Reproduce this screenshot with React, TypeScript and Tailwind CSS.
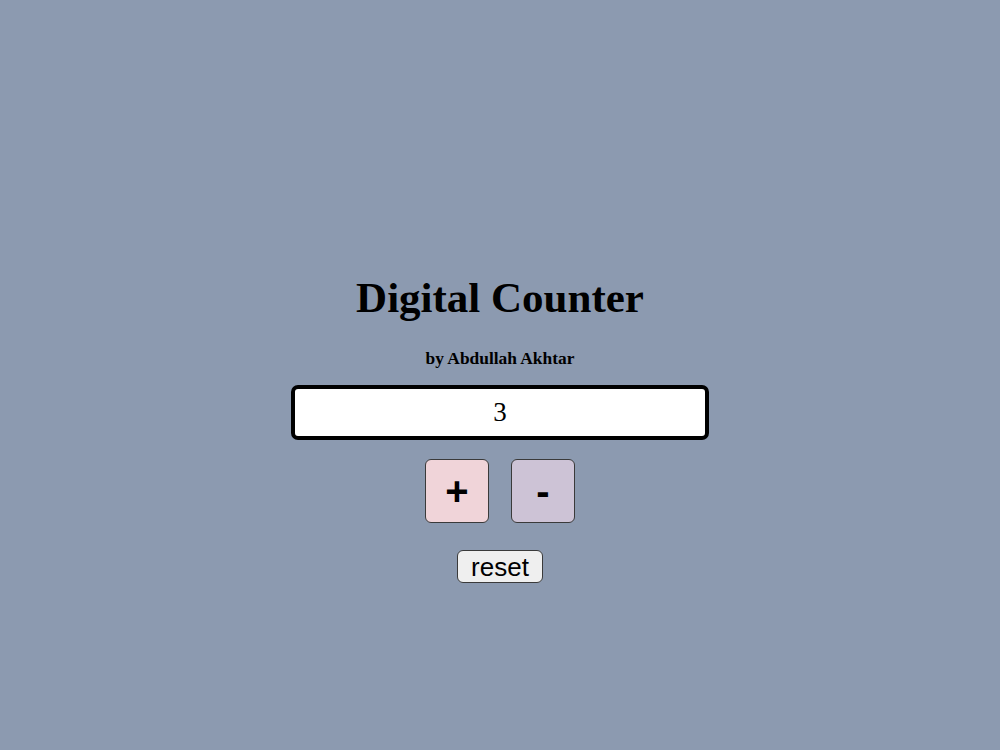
import React, { useState } from "react";

export default function App() {
  const [count, setCount] = useState(3);
  return (
    <div className="min-h-[750px] w-full bg-[#8c9ab0] flex flex-col items-center pt-[274px]" style={{ fontFamily: '"Liberation Serif", serif' }}>
      <h1 className="text-[43px] font-bold leading-[48px] text-black m-0">Digital Counter</h1>
      <p className="mt-[26px] text-[17.4px] font-bold leading-[20px] text-black">by Abdullah Akhtar</p>
      <div className="mt-[17px] w-[418px] h-[55px] border-[4px] border-black rounded-[7px] bg-white flex items-center justify-center text-[27px] text-black">
        {count}
      </div>
      <div className="mt-[19px] flex gap-[22px]">
        <button
          onClick={() => setCount(count + 1)}
          className="w-[64px] h-[64px] rounded-[6px] border-[1.5px] border-[#3a3a3a] bg-[#f0d4d9] text-[40px] font-bold leading-none text-black flex items-center justify-center"
          style={{ fontFamily: '"Liberation Sans", Arial, sans-serif' }}
        >
          +
        </button>
        <button
          onClick={() => setCount(count - 1)}
          className="w-[64px] h-[64px] rounded-[6px] border-[1.5px] border-[#3a3a3a] bg-[#cdc3d6] text-[40px] font-bold leading-none text-black flex items-center justify-center"
          style={{ fontFamily: '"Liberation Sans", Arial, sans-serif' }}
        >
          -
        </button>
      </div>
      <button
        onClick={() => setCount(0)}
        className="mt-[27px] h-[33px] px-[13px] rounded-[6px] border border-[#3a3a3a] bg-[#efefef] text-[26px] leading-[28px] text-black"
        style={{ fontFamily: '"Liberation Sans", Arial, sans-serif' }}
      >
        reset
      </button>
    </div>
  );
}
